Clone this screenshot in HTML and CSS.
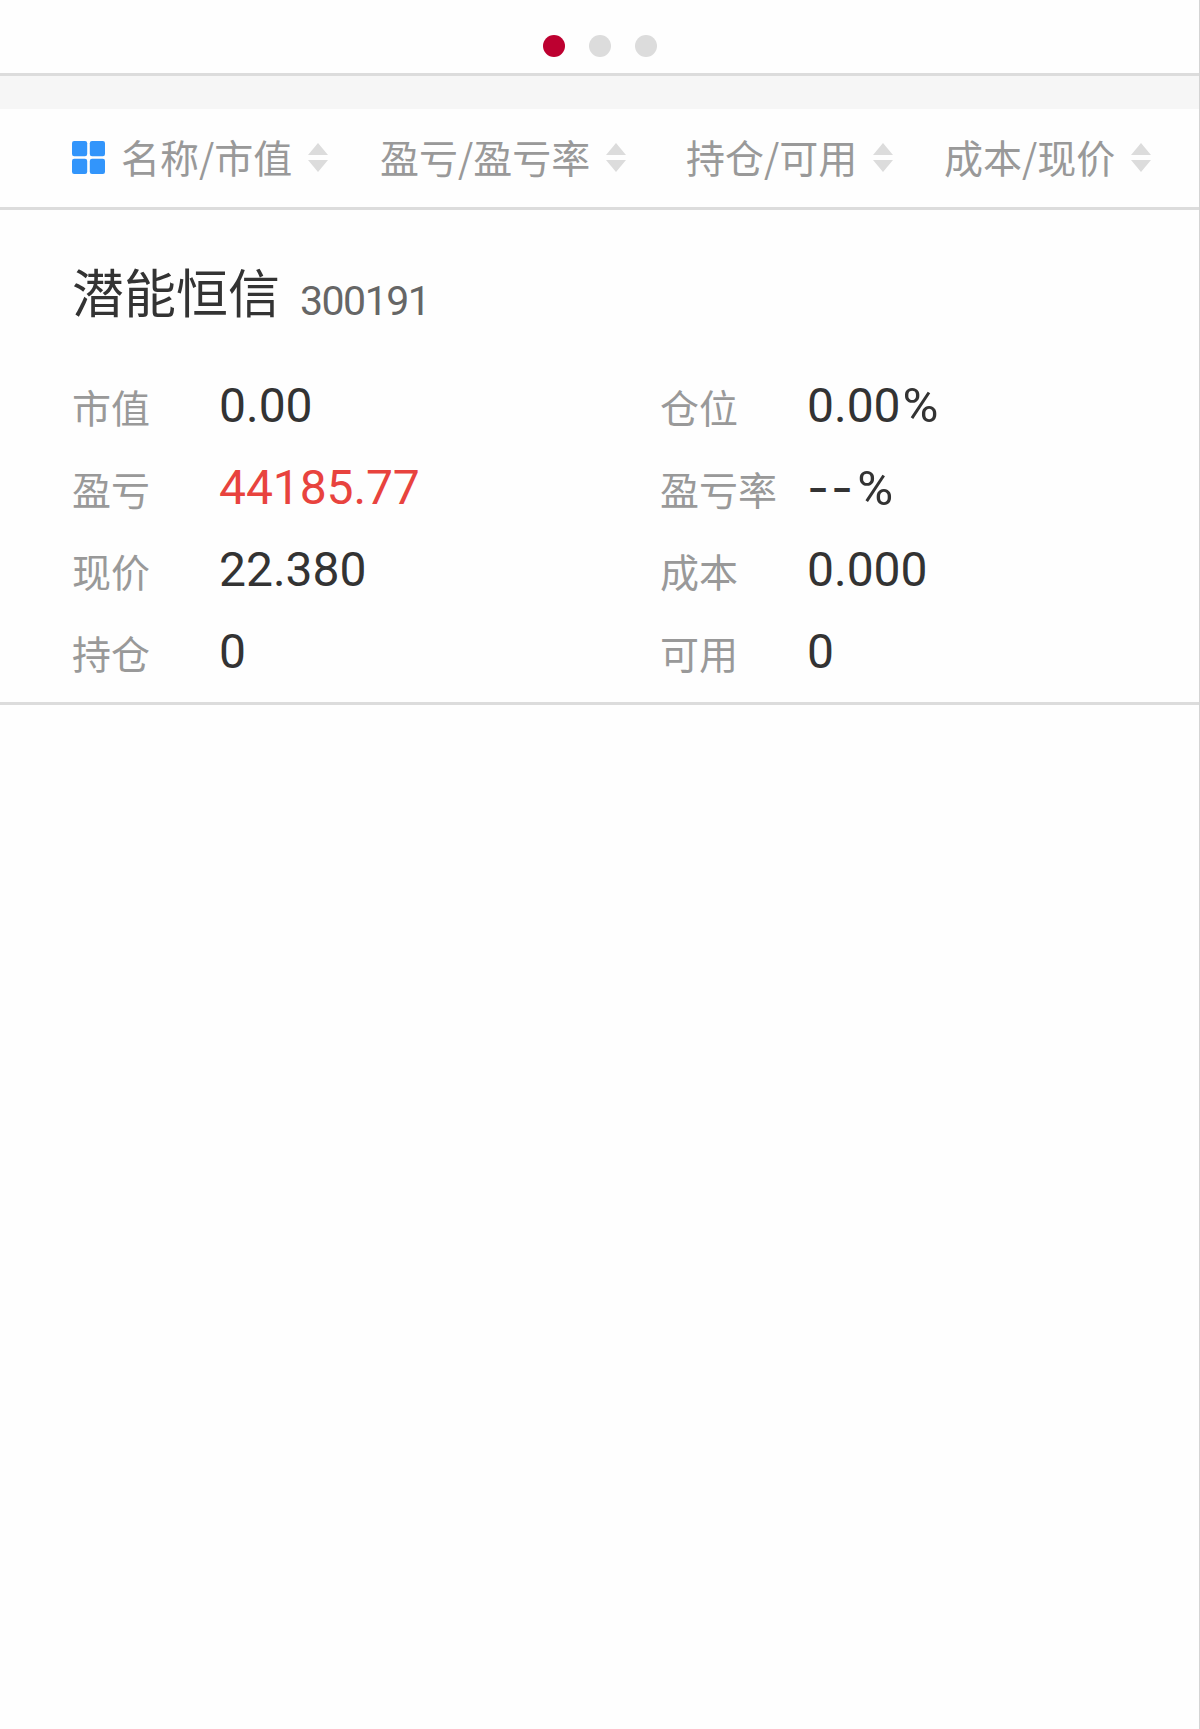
FILE: index.html
```html
<!DOCTYPE html>
<html lang="zh-CN">
<head>
    <meta charset="UTF-8">
    <title>持仓</title>
    <link rel="stylesheet" href="styles.css">
</head>
<body>
<div class="page">
    <div class="dots">
        <span class="dot active"></span>
        <span class="dot"></span>
        <span class="dot"></span>
    </div>
    <div class="band"></div>
    <div class="head">
        <div class="col">
            <svg class="grid-icon" viewBox="0 0 33 33">
                <rect x="0" y="0" width="15.2" height="15.2" rx="2.2"/>
                <rect x="17.8" y="0" width="15.2" height="15.2" rx="2.2"/>
                <rect x="0" y="17.8" width="15.2" height="15.2" rx="2.2"/>
                <rect x="17.8" y="17.8" width="15.2" height="15.2" rx="2.2"/>
            </svg>
            <span>名称/市值</span>
            <svg class="sort" viewBox="0 0 20 29"><path d="M10 0L20 12H0zM0 17H20L10 29z"/></svg>
        </div>
        <div class="col">
            <span>盈亏/盈亏率</span>
            <svg class="sort" viewBox="0 0 20 29"><path d="M10 0L20 12H0zM0 17H20L10 29z"/></svg>
        </div>
        <div class="col">
            <span>持仓/可用</span>
            <svg class="sort" viewBox="0 0 20 29"><path d="M10 0L20 12H0zM0 17H20L10 29z"/></svg>
        </div>
        <div class="col">
            <span>成本/现价</span>
            <svg class="sort" viewBox="0 0 20 29"><path d="M10 0L20 12H0zM0 17H20L10 29z"/></svg>
        </div>
    </div>
    <div class="stock">
        <div class="title">
            <span class="name">潜能恒信</span>
            <span class="code">300191</span>
        </div>
        <div class="info">
            <div class="item"><span class="label">市值</span><span class="value">0.00</span></div>
            <div class="item"><span class="label">仓位</span><span class="value">0.00<span class="pct">%</span></span></div>
            <div class="item"><span class="label">盈亏</span><span class="value red">44185.77</span></div>
            <div class="item"><span class="label">盈亏率</span><span class="value"><span class="dash">--</span><span class="pct">%</span></span></div>
            <div class="item"><span class="label">现价</span><span class="value">22.380</span></div>
            <div class="item"><span class="label">成本</span><span class="value">0.000</span></div>
            <div class="item"><span class="label">持仓</span><span class="value">0</span></div>
            <div class="item"><span class="label">可用</span><span class="value">0</span></div>
        </div>
    </div>
</div>
</body>
</html>
```
FILE: styles.css
```css
*{ margin: 0; padding: 0; box-sizing: border-box;}
body{
    background: #fefefe;
    font-family: "Noto Sans CJK SC", sans-serif;
}
.page{
    width: 1200px;
    height: 1729px;
    border-right: 1px solid #d4d4d4;
    overflow: hidden;
}
.dots{
    display: flex;
    justify-content: center;
    gap: 24px;
    height: 76px;
    padding: 35px 0 0 1px;
    border-bottom: 3px solid #dcdcdc;
}
.dot{
    width: 22px;
    height: 22px;
    border-radius: 50%;
    background: #dcdcdc;
}
.dot.active{
    background: #bd0030;
}
.band{
    height: 33px;
    background: #f6f6f6;
}
.head{
    display: grid;
    grid-template-columns: 308px 306px 258px 1fr;
    align-items: center;
    height: 101px;
    padding: 0 0 2px 72px;
    border-bottom: 3px solid #dcdcdc;
    color: #999;
    font-size: 39px;
    line-height: 56px;
}
.col{
    display: flex;
    align-items: center;
    white-space: nowrap;
}
.col span{
    margin-top: -2px;
}
.grid-icon{
    width: 33px;
    height: 33px;
    margin-right: 16px;
    fill: #3295fb;
}
.sort{
    width: 20px;
    height: 29px;
    margin-left: 16px;
    fill: #dcdcdc;
}
.stock{
    padding: 45px 0 9px 72px;
    border-bottom: 3px solid #dcdcdc;
}
.title{
    display: flex;
    align-items: flex-end;
    margin-bottom: 38px;
}
.name{
    color: #333;
    font-size: 52px;
    line-height: 72px;
}
.code{
    margin: 0 0 3px 20px;
    color: #666;
    font-family: Roboto, sans-serif;
    font-size: 41px;
    line-height: 46px;
    letter-spacing: -1.5px;
}
.info{
    display: grid;
    grid-template-columns: 588px 1fr;
}
.item{
    display: flex;
    align-items: center;
    height: 82px;
}
.label{
    width: 147px;
    color: #999;
    font-size: 39px;
    line-height: 56px;
}
.value{
    color: #333;
    font-family: Roboto, sans-serif;
    font-size: 48px;
    line-height: 56px;
}
.value.red{
    color: #e8433e;
    letter-spacing: -.1px;
}
.dash{
    font-family: Inter, sans-serif;
    letter-spacing: 2px;
}
.pct{
    margin-left: 2px;
    font-size: 49px;
}
```
